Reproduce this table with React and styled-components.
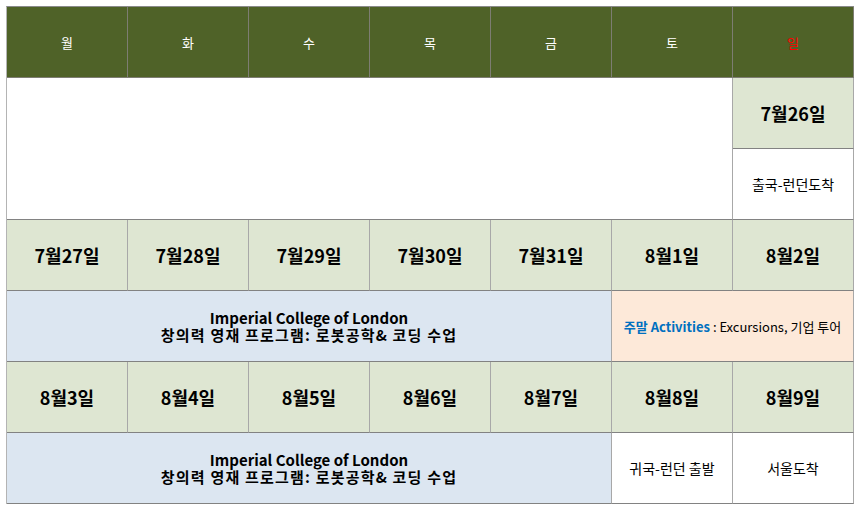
import React from 'react'
import styled, { createGlobalStyle } from 'styled-components'

const GlobalStyle = createGlobalStyle`
  html, body {
    margin: 0;
    padding: 0;
    background: #ffffff;
  }
  body {
    font-family: "Noto Sans CJK KR", "Noto Sans", sans-serif;
  }
`

const Page = styled.div`
  width: 859px;
  height: 510px;
  padding: 6px;
  box-sizing: border-box;
`

const Grid = styled.div`
  display: grid;
  grid-template-columns: repeat(7, 121px);
  grid-auto-rows: 71px;
  width: max-content;
  border-top: 1px solid #8a8a8a;
  border-left: 1px solid #b4b4b4;
`

const Cell = styled.div`
  box-sizing: border-box;
  display: flex;
  flex-direction: column;
  align-items: center;
  justify-content: center;
  text-align: center;
  border-right: 1px solid #a8a8a8;
  border-bottom: 1px solid #828282;
  background: ${({ bg }) => bg || '#ffffff'};
  grid-column: ${({ span }) => (span ? `span ${span}` : 'auto')};
  grid-row: ${({ rows }) => (rows ? `span ${rows}` : 'auto')};
  color: #000000;
`

const HeadCell = styled(Cell)`
  background: #4f6228;
  color: ${({ sunday }) => (sunday ? '#ff0000' : '#ffffff')};
  font-size: 13px;
  border-right-color: #7d7d72;
  border-bottom-color: #7d7d72;
`

const DateCell = styled(Cell)`
  background: #dee6d2;
  font-size: 18px;
  font-weight: 700;
`

const NoteCell = styled(Cell)`
  font-size: 14px;
`

const ProgramCell = styled(Cell)`
  background: #dce6f1;
  font-size: 15px;
  font-weight: 700;
  line-height: 17px;
`

const ProgramLine = styled.div`
  letter-spacing: ${({ wide }) => (wide ? '1.2px' : '0')};
`

const WeekendCell = styled(Cell)`
  background: #fde9d9;
  font-size: 13px;
  white-space: nowrap;
`

const Blue = styled.span`
  color: #0070c0;
  font-weight: 700;
`

const days = ['월', '화', '수', '목', '금', '토', '일']
const week1 = ['7월27일', '7월28일', '7월29일', '7월30일', '7월31일', '8월1일', '8월2일']
const week2 = ['8월3일', '8월4일', '8월5일', '8월6일', '8월7일', '8월8일', '8월9일']

const Program = () => (
  <ProgramCell span={5}>
    <ProgramLine>Imperial College of London</ProgramLine>
    <ProgramLine wide>창의력 영재 프로그램: 로봇공학&amp; 코딩 수업</ProgramLine>
  </ProgramCell>
)

const App = () => (
  <>
    <GlobalStyle />
    <Page>
      <Grid>
        {days.map((d, i) => (
          <HeadCell key={d} sunday={i === 6}>{d}</HeadCell>
        ))}

        <Cell span={6} rows={2} />
        <DateCell>7월26일</DateCell>
        <NoteCell>출국-런던도착</NoteCell>

        {week1.map(d => <DateCell key={d}>{d}</DateCell>)}
        <Program />
        <WeekendCell span={2}>
          <span><Blue>주말 Activities</Blue> : Excursions, 기업 투어</span>
        </WeekendCell>

        {week2.map(d => <DateCell key={d}>{d}</DateCell>)}
        <Program />
        <NoteCell>귀국-런던 출발</NoteCell>
        <NoteCell>서울도착</NoteCell>
      </Grid>
    </Page>
  </>
)

export default App
